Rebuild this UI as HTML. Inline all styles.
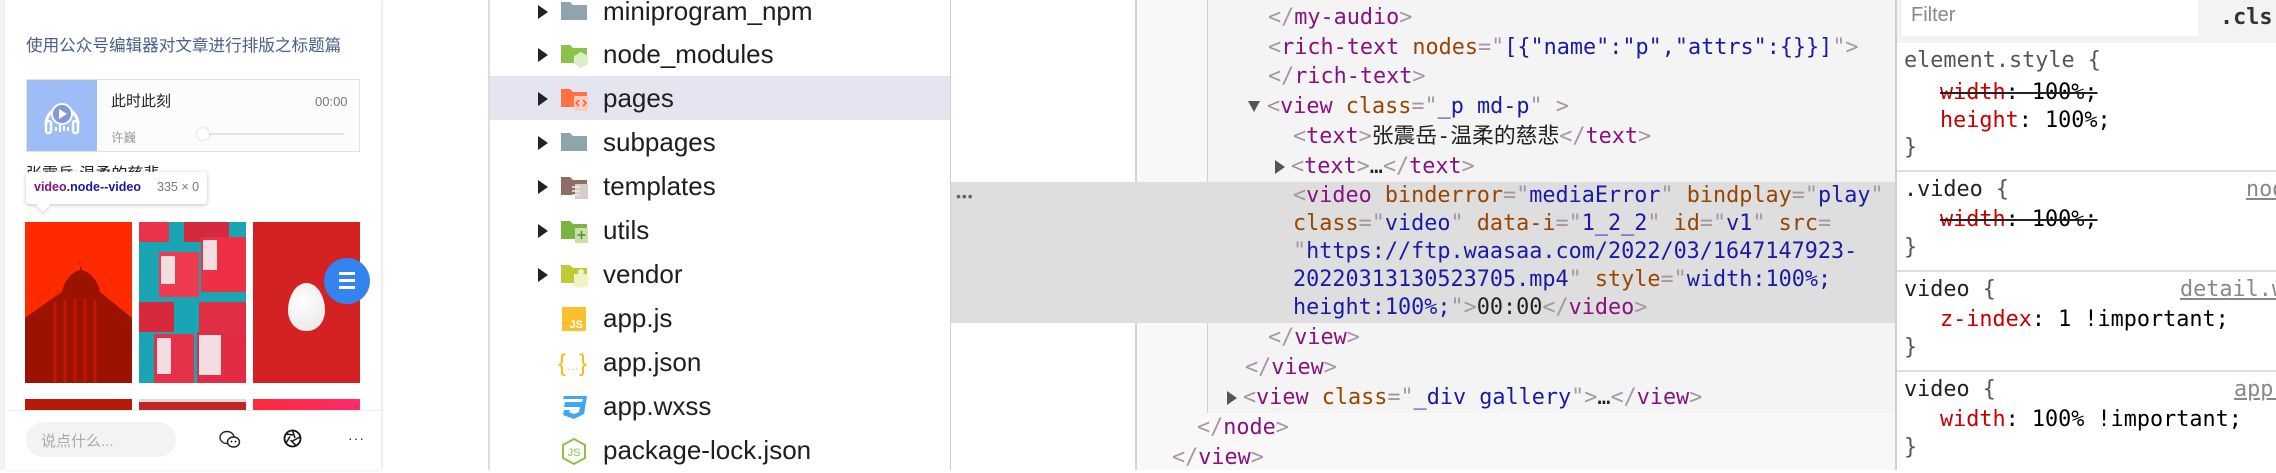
<!DOCTYPE html>
<html><head><meta charset="utf-8">
<style>
*{margin:0;padding:0;box-sizing:border-box}
body{width:2276px;height:470px;overflow:hidden;background:#fff;position:relative;font-family:"Liberation Sans","Noto Sans CJK SC",sans-serif}
.a{position:absolute;white-space:nowrap}
.m{font-family:"DejaVu Sans Mono","Liberation Mono",monospace;font-size:21.8px;line-height:28px;height:28px}
.t{color:#881280}.b{color:#a894a6}.n{color:#994500}.v{color:#1a1aa6}.k{color:#222}
.row{position:absolute;left:490px;width:460px;height:44px}
.row .ar{position:absolute;left:48px;top:15px;width:0;height:0;border-left:10px solid #222;border-top:7px solid transparent;border-bottom:7px solid transparent}
.row svg{position:absolute;left:71px;top:9px}
.row .tx{position:absolute;left:113px;top:6px;font-size:26px;color:#1e1e1e;line-height:30px}
.p{color:#c80000}.s{text-decoration:line-through;text-decoration-color:#222}
.lk{color:#888;text-decoration:underline}
</style></head><body>
<!-- phone panel -->
<div class="a" style="left:0;top:0;width:5px;height:470px;background:#f3f3f3"></div>
<div class="a" style="left:5px;top:0;width:376px;height:470px;background:#fff;box-shadow:1px 0 3px rgba(0,0,0,.12)"></div>
<div class="a" style="left:26px;top:32px;font-size:16.6px;color:#4a5d8c">使用公众号编辑器对文章进行排版之标题篇</div>
<div class="a" style="left:26px;top:79px;width:334px;height:73px;border:1px solid #e2e2e2;background:#fcfcfc"></div>
<div class="a" style="left:27px;top:80px;width:70px;height:71px;background:#9ebcf5"></div>
<svg class="a" style="left:42px;top:94px" width="40" height="42" viewBox="0 0 40 42">
<path d="M4 30 A16 16 0 1 1 36 30" fill="none" stroke="#fff" stroke-width="3"/>
<circle cx="20" cy="20" r="10" fill="#7f9ad6" stroke="#fff" stroke-width="2"/>
<path d="M17 15 L25 20 L17 25Z" fill="#fff"/>
<rect x="4" y="27" width="5" height="12" rx="2" fill="none" stroke="#fff" stroke-width="2.5"/>
<rect x="31" y="27" width="5" height="12" rx="2" fill="none" stroke="#fff" stroke-width="2.5"/>
<path d="M14 33v4M18 31v7M22 32v5M26 33v4" stroke="#fff" stroke-width="2"/>
</svg>
<div class="a" style="left:111px;top:90px;font-size:15px;color:#222">此时此刻</div>
<div class="a" style="left:315px;top:94px;font-size:13px;color:#777">00:00</div>
<div class="a" style="left:111px;top:127px;font-size:12.5px;color:#999">许巍</div>
<div class="a" style="left:203px;top:133px;width:141px;height:2px;background:#e5e5e5"></div>
<div class="a" style="left:197px;top:128px;width:12px;height:12px;border-radius:50%;background:#fff;box-shadow:0 0 2px rgba(0,0,0,.25)"></div>
<div class="a" style="left:26px;top:160px;font-size:16px;color:#222">张震岳-温柔的慈悲</div>
<div class="a" style="left:26px;top:172px;width:181px;height:32px;background:#fff;border-radius:3px;box-shadow:0 1px 4px rgba(0,0,0,.25)"></div>
<div class="a" style="left:38px;top:200px;width:10px;height:10px;background:#fff;transform:rotate(45deg);box-shadow:2px 2px 3px rgba(0,0,0,.12)"></div>
<div class="a" style="left:34px;top:180px;font-size:12.5px;font-weight:bold"><span style="color:#881280">video</span><span style="color:#1a1aa6">.node--video</span></div>
<div class="a" style="left:157px;top:180px;font-size:12.5px;color:#777">335 × 0</div>
<!-- images -->
<div class="a" style="left:25px;top:222px;width:107px;height:161px;background:#ff2a00;overflow:hidden">
<svg width="107" height="161"><path d="M52 36l3 6 0 6c-10 3-16 12-18 22l-12 8-25 18v65h107v-65l-22-18-10-8c-2-10-8-19-18-22z" fill="#8a0f00" opacity=".85"/><path d="M30 80v81M40 78v83M50 76v85M60 76v85M70 78v83" stroke="#c01500" stroke-width="3"/></svg></div>
<div class="a" style="left:139px;top:222px;width:107px;height:161px;background:#1aa5b5;overflow:hidden">
<svg width="107" height="161"><rect x="0" y="0" width="30" height="20" fill="#e8334a"/><rect x="45" y="0" width="45" height="20" fill="#d42a40"/><rect x="20" y="30" width="40" height="45" fill="#f03a50"/><rect x="22" y="34" width="14" height="28" fill="#f3dde0"/><rect x="62" y="15" width="45" height="55" fill="#ee3045"/><rect x="64" y="18" width="14" height="30" fill="#f3dde0"/><rect x="0" y="80" width="35" height="30" fill="#d8283c"/><rect x="60" y="80" width="47" height="30" fill="#e02e44"/><rect x="15" y="112" width="40" height="49" fill="#e53248"/><rect x="18" y="116" width="14" height="36" fill="#f3dde0"/><rect x="58" y="110" width="49" height="51" fill="#e12c44"/><rect x="60" y="113" width="22" height="40" fill="#f3dde0"/></svg></div>
<div class="a" style="left:253px;top:222px;width:107px;height:161px;background:#d42224"></div>
<div class="a" style="left:288px;top:283px;width:37px;height:48px;border-radius:50% 50% 48% 48%/58% 58% 42% 42%;background:radial-gradient(circle at 40% 40%,#fff,#e4e4e4)"></div>
<div class="a" style="left:25px;top:399px;width:107px;height:12px;background:#b81a08"></div>
<div class="a" style="left:139px;top:399px;width:107px;height:12px;background:#c0252a;border-top:3px solid #ddd"></div>
<div class="a" style="left:253px;top:399px;width:107px;height:12px;background:linear-gradient(90deg,#ff2a3a,#ff2a6a)"></div>
<div class="a" style="left:324px;top:258px;width:46px;height:46px;border-radius:50%;background:#3384ee"></div>
<div class="a" style="left:339px;top:272px;width:16px;height:2.5px;background:#fff;box-shadow:0 7px 0 #fff,0 14px 0 #fff"></div>
<!-- bottom bar -->
<div class="a" style="left:5px;top:410px;width:376px;height:60px;background:#fff;border-top:1px solid #eee"></div>
<div class="a" style="left:26px;top:422px;width:150px;height:35px;border-radius:18px;background:#f2f3f3"></div>
<div class="a" style="left:41px;top:430px;font-size:15px;color:#aaa">说点什么...</div>
<svg class="a" style="left:219px;top:430px" width="22" height="19" viewBox="0 0 22 19"><ellipse cx="8" cy="7.5" rx="7" ry="6" fill="#fff" stroke="#222" stroke-width="1.4"/><ellipse cx="14.5" cy="12" rx="6" ry="5" fill="#fff" stroke="#222" stroke-width="1.4"/><circle cx="12.5" cy="11.5" r=".9"/><circle cx="16.5" cy="11.5" r=".9"/></svg>
<svg class="a" style="left:283px;top:429px" width="19" height="19" viewBox="0 0 19 19"><circle cx="9.5" cy="9.5" r="8" fill="none" stroke="#111" stroke-width="1.8"/><path d="M9.5 1.5L12 9M17 8L9.5 12M13 16.5L7.5 11M3 14L7 7.5M3 5L10 6M6.5 2.5" fill="none" stroke="#111" stroke-width="1.5"/></svg>
<div class="a" style="left:348px;top:430px;font-size:14px;color:#222;letter-spacing:1px">···</div>
<!-- file tree -->
<div class="a" style="left:488px;top:0;width:2px;height:470px;background:#ddd"></div>
<div class="a" style="left:490px;top:76px;width:460px;height:44px;background:#e4e5f1"></div>
<div class="row" style="top:-10px"><div class="ar"></div><svg width="28" height="24"><path d="M0 3h9l3 3h14v15H0z" fill="#90a4ae"/></svg><div class="tx">miniprogram_npm</div></div>
<div class="row" style="top:33px"><div class="ar"></div><svg width="28" height="26"><path d="M0 3h9l3 3h14v15H0z" fill="#8bc34a"/><path d="M20 10l7 4v8l-7 4-7-4v-8z" fill="#dcedc8"/></svg><div class="tx">node_modules</div></div>
<div class="row" style="top:77px"><div class="ar"></div><svg width="28" height="26"><path d="M0 3h9l3 3h14v15H0z" fill="#ff7043"/><rect x="13" y="10" width="14" height="15" rx="2" fill="#ffccbc"/><path d="M18 14l-3 3 3 3M22 14l3 3-3 3" stroke="#f4511e" fill="none" stroke-width="1.3"/></svg><div class="tx">pages</div></div>
<div class="row" style="top:121px"><div class="ar"></div><svg width="28" height="24"><path d="M0 3h9l3 3h14v15H0z" fill="#90a4ae"/></svg><div class="tx">subpages</div></div>
<div class="row" style="top:165px"><div class="ar"></div><svg width="28" height="26"><path d="M0 3h9l3 3h14v15H0z" fill="#8d6e63"/><rect x="14" y="10" width="13" height="15" fill="#d7ccc8"/><path d="M11 13h8M11 17h8M11 21h8" stroke="#efebe9" stroke-width="1.5"/></svg><div class="tx">templates</div></div>
<div class="row" style="top:209px"><div class="ar"></div><svg width="28" height="26"><path d="M0 3h9l3 3h14v15H0z" fill="#7cb342"/><rect x="14" y="10" width="13" height="15" fill="#c5e1a5"/><path d="M20.5 13v8M16.5 17h8" stroke="#558b2f" stroke-width="1.5"/></svg><div class="tx">utils</div></div>
<div class="row" style="top:253px"><div class="ar"></div><svg width="28" height="26"><path d="M0 3h9l3 3h14v15H0z" fill="#c0ca33"/><path d="M13 12h14v12l-7 2-7-2z" fill="#f0f4c3"/><circle cx="20" cy="10" r="3" fill="#f0f4c3"/></svg><div class="tx">vendor</div></div>
<div class="row" style="top:297px"><svg width="28" height="26"><rect x="1" y="1" width="24" height="24" fill="#fbc02d"/><text x="22" y="22" font-size="11" font-weight="bold" fill="#fff" text-anchor="end" font-family="Liberation Sans">JS</text></svg><div class="tx">app.js</div></div>
<div class="row" style="top:341px"><svg width="30" height="26" style="left:68px"><text x="0" y="21" font-size="24" fill="#f9b81a" font-family="Liberation Sans">{</text><text x="9" y="20" font-size="12" fill="#f9b81a" font-family="Liberation Sans">…</text><text x="21" y="21" font-size="24" fill="#f9b81a" font-family="Liberation Sans">}</text></svg><div class="tx">app.json</div></div>
<div class="row" style="top:385px"><svg width="28" height="26"><path d="M3 2h23l-3 18-10 5-11-4 1-5h6l-1 2 5 2 5-2 1-5H3l1-5h17l1-3H2z" fill="#42a5f5"/></svg><div class="tx">app.wxss</div></div>
<div class="row" style="top:429px"><svg width="28" height="28"><path d="M13 1l11 6v13l-11 6-11-6V7z" fill="none" stroke="#8bc34a" stroke-width="2"/><text x="13" y="18" font-size="11" fill="#8bc34a" text-anchor="middle" font-family="Liberation Sans">JS</text></svg><div class="tx">package-lock.json</div></div>
<!-- elements panel -->
<div class="a" style="left:950px;top:0;width:1px;height:470px;background:#d0d0d0"></div>
<div class="a" style="left:1135px;top:0;width:2px;height:470px;background:#d4d4d4"></div>
<div class="a" style="left:1137px;top:0;width:758px;height:470px;background:#f8f8f8"></div>
<div class="a" style="left:1207px;top:0;width:688px;height:413px;background:#f4f4f4;border-left:1px solid #d0d0d0"></div>
<div class="a" style="left:951px;top:182px;width:944px;height:141px;background:#dedede"></div>
<div class="a" style="left:956px;top:188px;font-size:14px;color:#666;letter-spacing:1px">•••</div>
<div class="a m" style="left:1268px;top:4px"><span class="b">&lt;/</span><span class="t">my-audio</span><span class="b">&gt;</span></div>
<div class="a m" style="left:1268px;top:34px"><span class="b">&lt;</span><span class="t">rich-text</span> <span class="n">nodes</span><span class="b">="</span><span class="v">[{"name":"p","attrs":{}}]</span><span class="b">"&gt;</span></div>
<div class="a m" style="left:1268px;top:63px"><span class="b">&lt;/</span><span class="t">rich-text</span><span class="b">&gt;</span></div>
<div class="a" style="left:1248px;top:101px;width:0;height:0;border-top:11px solid #555;border-left:6px solid transparent;border-right:6px solid transparent"></div>
<div class="a m" style="left:1267px;top:93px"><span class="b">&lt;</span><span class="t">view</span> <span class="n">class</span><span class="b">="</span><span class="v">_p md-p</span><span class="b">" &gt;</span></div>
<div class="a m" style="left:1293px;top:123px"><span class="b">&lt;</span><span class="t">text</span><span class="b">&gt;</span><span class="k">张震岳-温柔的慈悲</span><span class="b">&lt;/</span><span class="t">text</span><span class="b">&gt;</span></div>
<div class="a" style="left:1275px;top:160px;width:0;height:0;border-left:10px solid #555;border-top:7px solid transparent;border-bottom:7px solid transparent"></div>
<div class="a m" style="left:1291px;top:153px"><span class="b">&lt;</span><span class="t">text</span><span class="b">&gt;</span><span class="k">…</span><span class="b">&lt;/</span><span class="t">text</span><span class="b">&gt;</span></div>
<div class="a m" style="left:1293px;top:182px"><span class="b">&lt;</span><span class="t">video</span> <span class="n">binderror</span><span class="b">="</span><span class="v">mediaError</span><span class="b">"</span> <span class="n">bindplay</span><span class="b">="</span><span class="v">play</span><span class="b">"</span></div>
<div class="a m" style="left:1293px;top:210px"><span class="n">class</span><span class="b">="</span><span class="v">video</span><span class="b">"</span> <span class="n">data-i</span><span class="b">="</span><span class="v">1_2_2</span><span class="b">"</span> <span class="n">id</span><span class="b">="</span><span class="v">v1</span><span class="b">"</span> <span class="n">src</span><span class="b">=</span></div>
<div class="a m" style="left:1293px;top:238px"><span class="b">"</span><span class="v">https://ftp.waasaa.com/2022/03/1647147923-</span></div>
<div class="a m" style="left:1293px;top:266px"><span class="v">20220313130523705.mp4</span><span class="b">"</span> <span class="n">style</span><span class="b">="</span><span class="v">width:100%;</span></div>
<div class="a m" style="left:1293px;top:294px"><span class="v">height:100%;</span><span class="b">"&gt;</span><span class="k">00:00</span><span class="b">&lt;/</span><span class="t">video</span><span class="b">&gt;</span></div>
<div class="a m" style="left:1268px;top:324px"><span class="b">&lt;/</span><span class="t">view</span><span class="b">&gt;</span></div>
<div class="a m" style="left:1245px;top:354px"><span class="b">&lt;/</span><span class="t">view</span><span class="b">&gt;</span></div>
<div class="a" style="left:1227px;top:391px;width:0;height:0;border-left:10px solid #555;border-top:7px solid transparent;border-bottom:7px solid transparent"></div>
<div class="a m" style="left:1243px;top:384px"><span class="b">&lt;</span><span class="t">view</span> <span class="n">class</span><span class="b">="</span><span class="v">_div gallery</span><span class="b">"&gt;</span><span class="k">…</span><span class="b">&lt;/</span><span class="t">view</span><span class="b">&gt;</span></div>
<div class="a m" style="left:1197px;top:414px"><span class="b">&lt;/</span><span class="t">node</span><span class="b">&gt;</span></div>
<div class="a m" style="left:1172px;top:444px"><span class="b">&lt;/</span><span class="t">view</span><span class="b">&gt;</span></div>
<!-- styles pane -->
<div class="a" style="left:1895px;top:0;width:381px;height:470px;background:#fff;border-left:2px solid #d0d0d0"></div>
<div class="a" style="left:1897px;top:0;width:379px;height:43px;background:#f3f3f3"></div>
<div class="a" style="left:1902px;top:0;width:296px;height:36px;background:#fff"></div>
<div class="a" style="left:1911px;top:4px;font-size:20px;color:#888">Filter</div>
<div class="a m" style="left:2220px;top:4px;font-weight:bold;color:#333">.cls</div>
<div class="a" style="left:1897px;top:170px;width:379px;height:2px;background:#ddd"></div>
<div class="a" style="left:1897px;top:270px;width:379px;height:2px;background:#ddd"></div>
<div class="a" style="left:1897px;top:370px;width:379px;height:2px;background:#ddd"></div>
<div class="a m" style="left:1904px;top:47px;color:#555">element.style {</div>
<div class="a m" style="left:1940px;top:79px"><span class="s"><span class="p">width</span>: 100%;</span></div>
<div class="a m" style="left:1940px;top:107px"><span class="p">height</span>: 100%;</div>
<div class="a m" style="left:1904px;top:134px;color:#555">}</div>
<div class="a m" style="left:1904px;top:176px;color:#222">.video <span style="color:#555">{</span></div>
<div class="a m lk" style="left:2246px;top:176px">node</div>
<div class="a m" style="left:1940px;top:206px"><span class="s"><span class="p">width</span>: 100%;</span></div>
<div class="a m" style="left:1904px;top:234px;color:#555">}</div>
<div class="a m" style="left:1904px;top:276px;color:#222">video <span style="color:#555">{</span></div>
<div class="a m lk" style="left:2180px;top:276px">detail.wxss</div>
<div class="a m" style="left:1940px;top:306px"><span class="p">z-index</span>: 1 !important;</div>
<div class="a m" style="left:1904px;top:334px;color:#555">}</div>
<div class="a m" style="left:1904px;top:376px;color:#222">video <span style="color:#555">{</span></div>
<div class="a m lk" style="left:2234px;top:376px">app.wxss</div>
<div class="a m" style="left:1940px;top:406px"><span class="p">width</span>: 100% !important;</div>
<div class="a m" style="left:1904px;top:434px;color:#555">}</div>
</body></html>
